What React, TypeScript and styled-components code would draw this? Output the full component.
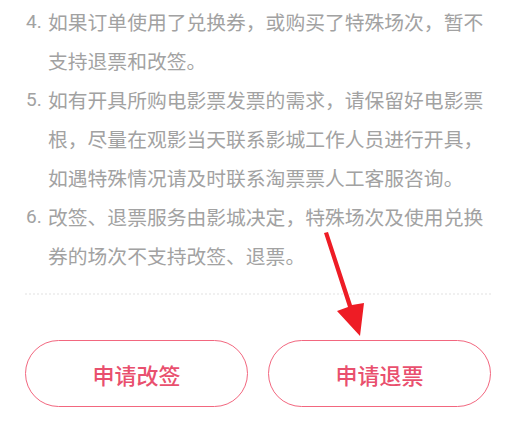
import React from 'react'
import styled, { createGlobalStyle } from 'styled-components'

const GlobalStyle = createGlobalStyle`
  html, body {
    margin: 0;
    padding: 0;
    background: #ffffff;
  }
  body {
    font-family: "Noto Sans CJK SC", "Noto Sans", sans-serif;
  }
`

const Page = styled.div`
  position: relative;
  width: 514px;
  height: 430px;
  overflow: hidden;
  background: #ffffff;
  padding: 0 23px 0 25px;
  box-sizing: border-box;
`

const NoticeList = styled.ol`
  list-style: none;
  margin: 0;
  padding: 2px 0 18px 1px;
  border-bottom: 2px dotted #f0f0f0;
`

const NoticeItem = styled.li`
  display: grid;
  grid-template-columns: 22px 1fr;
  font-size: 19.8px;
  line-height: 39px;
  color: #a2a2a2;
`

const Index = styled.span`
  font-family: "Roboto", "Noto Sans", sans-serif;
  font-size: 19px;
`

const ActionRow = styled.div`
  display: grid;
  grid-template-columns: 1fr 1fr;
  gap: 20px;
  margin-top: 45px;
`

const PillButton = styled.button`
  height: 67px;
  border: 1.5px solid #f2677f;
  border-radius: 34px;
  background: #ffffff;
  color: #e9506e;
  font-family: "Noto Sans CJK SC", sans-serif;
  font-size: 22px;
  font-weight: 500;
  cursor: pointer;
  padding: 0;
`

const Pointer = styled.svg`
  position: absolute;
  left: 319px;
  top: 229px;
`

const notices = [
  { n: '4.', text: '如果订单使用了兑换券，或购买了特殊场次，暂不支持退票和改签。' },
  {
    n: '5.',
    text: '如有开具所购电影票发票的需求，请保留好电影票根，尽量在观影当天联系影城工作人员进行开具，如遇特殊情况请及时联系淘票票人工客服咨询。',
  },
  { n: '6.', text: '改签、退票服务由影城决定，特殊场次及使用兑换券的场次不支持改签、退票。' },
]

export default function App() {
  return (
    <Page>
      <GlobalStyle />
      <NoticeList>
        {notices.map((item) => (
          <NoticeItem key={item.n}>
            <Index>{item.n}</Index>
            <span>{item.text}</span>
          </NoticeItem>
        ))}
      </NoticeList>
      <ActionRow>
        <PillButton>申请改签</PillButton>
        <PillButton>申请退票</PillButton>
      </ActionRow>
      {/* annotation arrow drawn over the page */}
      <Pointer width="50" height="112" viewBox="0 0 50 112">
        <path d="M5 4 L9 3 L33 76 L45 74 L41 107 L18 82 L29 78 Z" fill="#ee1c25" />
      </Pointer>
    </Page>
  )
}
